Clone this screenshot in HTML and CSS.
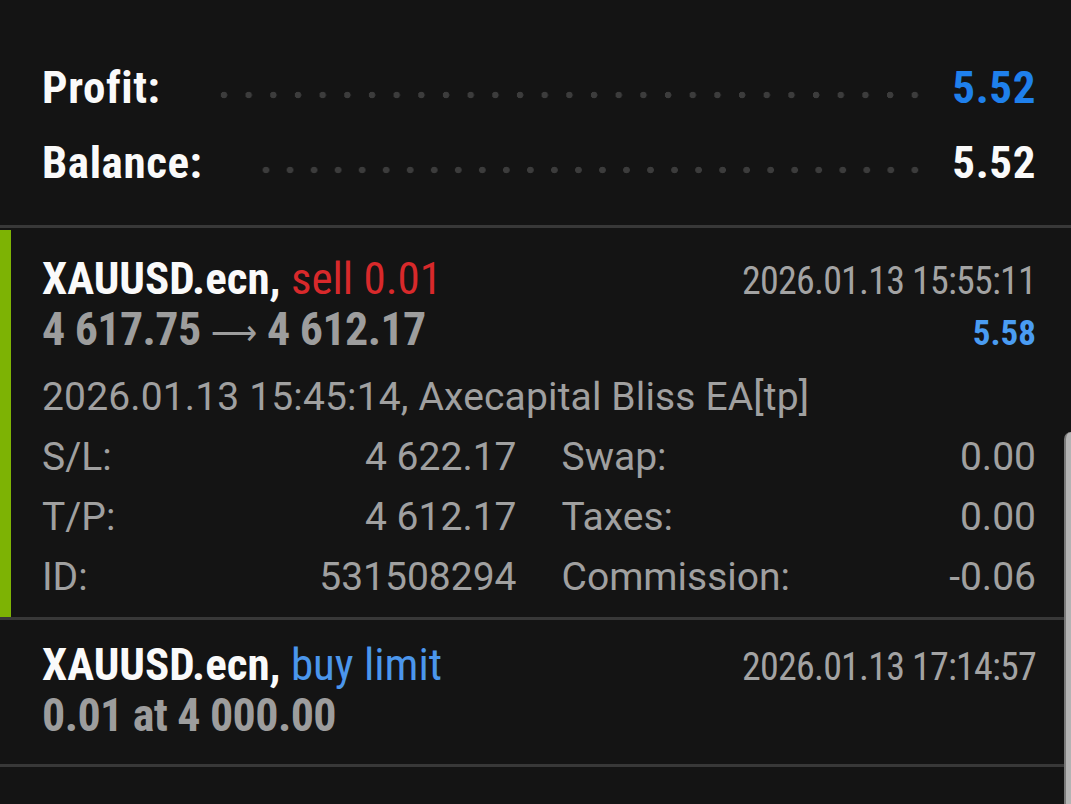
FILE: index.html
```html
<!DOCTYPE html>
<html lang="en">
<head>
  <meta charset="utf-8">
  <meta name="viewport" content="width=device-width,initial-scale=1" />
  <title>Trade</title>
  <link rel="stylesheet" href="styles.css">
</head>

<body>
  <div class="summary">
    <div class="sum-row">
      <span class="sum-label">Profit:</span>
      <span class="dots"></span>
      <span class="sum-value blue">5.52</span>
    </div>
    <div class="sum-row">
      <span class="sum-label">Balance:</span>
      <span class="dots"></span>
      <span class="sum-value">5.52</span>
    </div>
  </div>

  <div class="trade">
    <div class="mark"></div>
    <div class="trade-body first">
      <div class="head">
        <span class="title">XAUUSD.ecn, <span class="sell">sell 0.01</span></span>
        <span class="time">2026.01.13 15:55:11</span>
      </div>
      <div class="head">
        <span class="price">4 617.75 <span class="arrow">&#x27F6;</span> 4 612.17</span>
        <span class="gain">5.58</span>
      </div>
      <div class="comment">2026.01.13 15:45:14, Axecapital Bliss EA[tp]</div>
      <div class="details">
        <div class="cell"><span>S/L:</span><span>4 622.17</span></div>
        <div class="cell"><span>Swap:</span><span>0.00</span></div>
        <div class="cell"><span>T/P:</span><span>4 612.17</span></div>
        <div class="cell"><span>Taxes:</span><span>0.00</span></div>
        <div class="cell"><span>ID:</span><span>531508294</span></div>
        <div class="cell"><span>Commission:</span><span>-0.06</span></div>
      </div>
    </div>
  </div>

  <div class="trade last">
    <div class="trade-body second">
      <div class="head">
        <span class="title">XAUUSD.ecn, <span class="buy">buy limit</span></span>
        <span class="time">2026.01.13 17:14:57</span>
      </div>
      <div class="head">
        <span class="price">0.01 at 4 000.00</span>
      </div>
    </div>
  </div>

  <div class="edge"></div>
</body>
</html>
```

FILE: styles.css
```css
html {
  background: #141414;
}

body {
  margin: 0;
  font-family: Roboto, "Noto Sans", sans-serif;
  color: #a0a0a0;
  background: #141414;
  position: relative;
  min-height: 804px;
  overflow: hidden;
}

.summary {
  padding: 50px 35px 25px 42px;
}

.sum-row {
  display: flex;
  align-items: center;
  height: 75px;
  line-height: 75px;
  font-family: "Roboto Condensed", Roboto, sans-serif;
  font-stretch: condensed;
  font-weight: bold;
  font-size: 45px;
  letter-spacing: 0.6px;
  color: #fafafa;
}

.dots {
  flex: 1;
  height: 8px;
  margin: 14px 25px 0 52px;
  background-image: radial-gradient(circle, #3c3c3c 3px, transparent 3.6px);
  background-size: 24px 8px;
  background-repeat: space no-repeat;
}

.blue {
  color: #1f80ec;
}

.trade {
  display: flex;
  border-top: 3px solid #383838;
}

.trade.last {
  border-bottom: 3px solid #383838;
}

.mark {
  width: 11px;
  margin-top: 2px;
  background: #7db304;
}

.trade-body {
  flex: 1;
  padding: 26px 35px 10px 31px;
}

.trade-body.second {
  padding: 20px 35px 24px 42px;
}

.head {
  display: flex;
  justify-content: space-between;
  align-items: baseline;
  height: 50px;
  line-height: 50px;
  font-family: "Roboto Condensed", Roboto, sans-serif;
  font-stretch: condensed;
}

.title {
  font-size: 45px;
  font-weight: bold;
  color: #fafafa;
}

.sell {
  font-weight: normal;
  color: #d8292b;
}

.buy {
  font-weight: normal;
  color: #4b96ec;
}

.time {
  font-size: 38px;
  letter-spacing: -0.8px;
  color: #a3a3a3;
}

.price {
  font-size: 46px;
  font-weight: bold;
  letter-spacing: -0.6px;
  color: #9d9d9d;
}

.arrow {
  font-family: "DejaVu Sans", sans-serif;
  font-weight: normal;
  font-size: 36px;
  letter-spacing: 0;
}

.gain {
  font-size: 35px;
  font-weight: bold;
  color: #4a9cf2;
}

.comment {
  margin-top: 13px;
  font-size: 39px;
  letter-spacing: 0.15px;
  line-height: 60px;
  white-space: nowrap;
}

.details {
  display: grid;
  grid-template-columns: 1fr 1fr;
  column-gap: 45px;
  font-size: 39px;
  line-height: 60px;
}

.cell {
  display: flex;
  justify-content: space-between;
}

.edge {
  position: absolute;
  right: 0;
  top: 432px;
  bottom: 0;
  width: 5px;
  background: #b4b4b4;
  border-left: 2px solid #7a7a7a;
  border-top-left-radius: 8px;
}
```
